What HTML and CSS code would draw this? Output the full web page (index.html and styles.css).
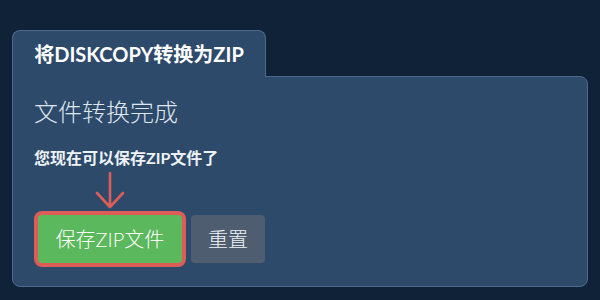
FILE: index.html
```html
<!DOCTYPE html>
<html lang="zh">
<head>
<meta charset="utf-8">
<link rel="stylesheet" href="styles.css">
</head>
<body>
<div class="wrap">
  <div class="tab">将DISKCOPY转换为ZIP</div>
  <div class="panel">
    <h2 class="heading">文件转换完成</h2>
    <p class="note">您现在可以保存ZIP文件了</p>
    <div class="actions">
      <div class="save-wrap">
        <svg class="arrow" width="30" height="38" viewBox="0 0 30 38">
          <path d="M15 1 V35 M2 21 L15 35 L28 21" fill="none" stroke="#dc5d57" stroke-width="2.6" stroke-linecap="round" stroke-linejoin="round"/>
        </svg>
        <button class="btn btn-save">保存ZIP文件</button>
      </div>
      <button class="btn btn-reset">重置</button>
    </div>
  </div>
</div>
</body>
</html>
```
FILE: styles.css
```css
html, body {
  margin: 0;
  padding: 0;
  background: #0f2237;
}
body {
  font-family: "Lato", "Noto Sans CJK SC", sans-serif;
  width: 600px;
  height: 300px;
  overflow: hidden;
}
.wrap {
  padding: 30px 12px 0;
}
.tab {
  position: relative;
  z-index: 1;
  box-sizing: border-box;
  width: 254px;
  height: 47px;
  margin-bottom: -1px;
  border: 1px solid #50698a;
  border-bottom: none;
  border-radius: 8px 8px 0 0;
  background: #2d4a6a;
  color: #ffffff;
  font-weight: 700;
  font-size: 20px;
  line-height: 46px;
  text-align: center;
}
.panel {
  box-sizing: border-box;
  width: 576px;
  height: 211px;
  border: 1px solid #50698a;
  border-radius: 0 8px 8px 8px;
  background: #2d4a6a;
  padding: 19px 20px 0 21px;
}
.heading {
  margin: 0;
  font-size: 24px;
  line-height: 32px;
  font-weight: 300;
  color: #dfe6ee;
}
.note {
  margin: 19px 0 0;
  font-size: 16px;
  line-height: 22px;
  font-weight: 700;
  color: #eef2f6;
}
.actions {
  display: flex;
  gap: 9px;
  margin-top: 46px;
  padding-left: 4px;
}
.save-wrap {
  position: relative;
}
.arrow {
  position: absolute;
  left: 57px;
  top: -43px;
}
.btn {
  border: none;
  border-radius: 4px;
  font-family: "Lato", "Noto Sans CJK SC", sans-serif;
  font-size: 20px;
  line-height: 28px;
  padding: 10px 17px;
  color: #ffffff;
  font-weight: 300;
  cursor: pointer;
}
.btn-save {
  background: #5cb85c;
  width: 144px;
  box-shadow: 0 0 0 4px #dc5d57;
}
.btn-reset {
  background: #4e5e70;
  width: 74px;
  color: #eef2f6;
}
```
